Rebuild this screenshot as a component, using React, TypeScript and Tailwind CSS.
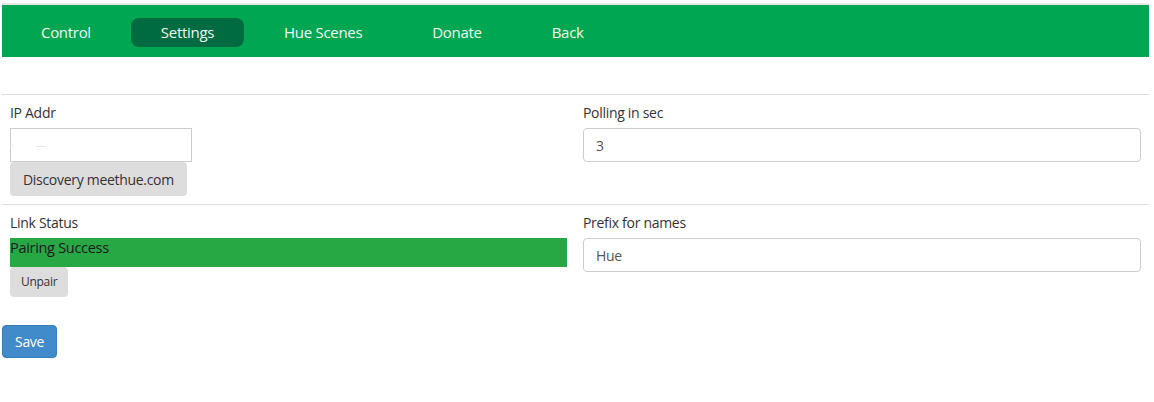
import React from "react";

export default function App() {
  const navItems = ["Control", "Settings", "Hue Scenes", "Donate", "Back"];
  return (
    <div className="w-[1154px] h-[402px] bg-white font-['Open_Sans',sans-serif] text-[#333] tracking-[-0.3px]">
      <div className="ml-[2px] w-[1147px]">
        <div className="h-[3px]" />
        <div className="h-[2px] bg-[#e7e7e7]" />
        <nav className="h-[52px] bg-[#00a651] flex items-center pt-[3px] pl-[9px] gap-[10px]">
          {navItems.map((n) => (
            <div
              key={n}
              className={
                "h-[29px] px-[30px] flex items-center rounded-[8px] text-[15px] text-[#f2f7f2] " +
                (n === "Settings" ? "bg-[#006b40]" : "")
              }
            >
              {n}
            </div>
          ))}
        </nav>
        <div className="h-[37px]" />
        <div className="border-t border-[#dddddd] grid grid-cols-[573px_1fr]">
          <div className="px-[8px] pt-[8px] pb-[8px]">
            <div className="text-[14px] leading-[20px] mb-[5px]">IP Addr</div>
            <div className="w-[182px] h-[34px] border border-[#cccccc] bg-white relative">
              <div className="absolute left-[1px] top-[15px] w-[1px] h-[3px] bg-[#eef]" />
              <div className="absolute left-[25px] top-[17px] w-[10px] h-[1px] bg-[#e4e4f4]" />
            </div>
            <button className="h-[34px] px-[13px] bg-[#dddddd] rounded-[4px] text-[14px] text-[#333]">
              Discovery meethue.com
            </button>
          </div>
          <div className="px-[8px] pt-[8px] pb-[8px]">
            <div className="text-[14px] leading-[20px] mb-[5px]">Polling in sec</div>
            <div className="h-[34px] border border-[#cccccc] rounded-[4px] flex items-center px-[12px] text-[14px] text-[#555]">
              3
            </div>
          </div>
        </div>
        <div className="border-t border-[#dddddd] grid grid-cols-[573px_1fr]">
          <div className="px-[8px] pt-[8px] pb-[8px]">
            <div className="text-[14px] leading-[20px] mb-[5px]">Link Status</div>
            <div className="h-[29px] bg-[#28a745] text-[14.5px] leading-[20px] text-[#1a1a1a]">
              Pairing Success
            </div>
            <button className="h-[30px] px-[11px] bg-[#dddddd] rounded-[4px] text-[12px] text-[#333]">
              Unpair
            </button>
          </div>
          <div className="px-[8px] pt-[8px] pb-[8px]">
            <div className="text-[14px] leading-[20px] mb-[5px]">Prefix for names</div>
            <div className="h-[34px] border border-[#cccccc] rounded-[4px] flex items-center px-[12px] text-[14px] text-[#555]">
              Hue
            </div>
          </div>
        </div>
        <div className="pt-[20px]">
          <button className="h-[33px] px-[12px] bg-[#428bca] border border-[#357ebd] rounded-[4px] text-[14px] text-white">
            Save
          </button>
        </div>
      </div>
    </div>
  );
}
